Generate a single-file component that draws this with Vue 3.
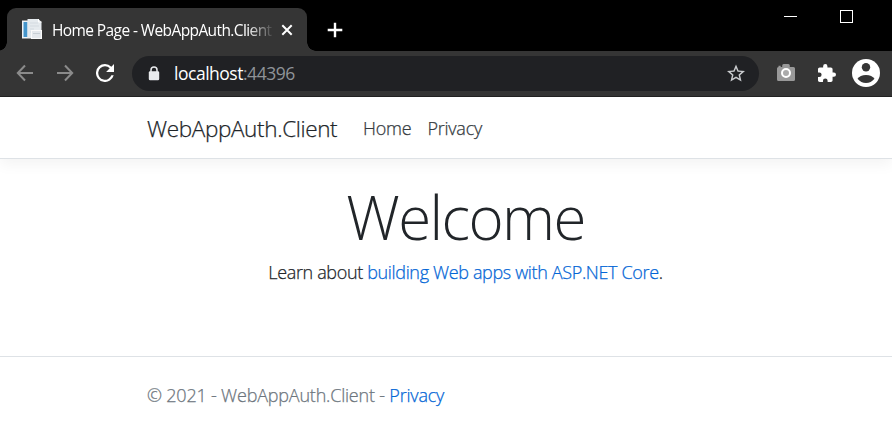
<script setup>
const navLinks = ['Home', 'Privacy']
</script>

<template>
  <div class="window">
    <header class="tabstrip">
      <div class="tab">
        <svg class="favicon" width="22" height="21" viewBox="0 0 22 21">
          <rect x="0" y="1.500" width="14" height="18" fill="#f0f3f6" />
          <rect x="1.500" y="3" width="4" height="15" fill="#4595cb" />
          <path d="M5.500 0h11l3 3v16h-14z" fill="#e5eaee" />
          <path d="M8 4h8M8 7h9M8 10h4M8 13h3" stroke="#d3dae0" />
          <path d="M16.500 0v3h3" fill="none" stroke="#fff" />
          <rect x="9.500" y="11.500" width="10" height="8" fill="#e4e8ec" stroke="#fafafa" />
          <path d="M11 14.500h7" stroke="#c8cfd5" />
        </svg>
        <span class="tab-title">Home Page - WebAppAuth.Client</span>
        <svg class="close" width="12" height="12" viewBox="0 0 12 12"><path d="M1.300 1.300l9.400 9.400M10.700 1.300l-9.400 9.400" stroke="#fff" stroke-width="2" /></svg>
      </div>
      <svg class="new-tab" width="16" height="16" viewBox="0 0 16 16"><path d="M8 .7v14.600M.7 8h14.600" stroke="#fff" stroke-width="2.400" /></svg>
      <div class="controls">
        <svg width="13" height="13" viewBox="0 0 13 13"><path d="M0 6.500h13" stroke="#fff" /></svg>
        <svg width="13" height="13" viewBox="0 0 13 13"><rect x=".5" y=".5" width="12" height="12" fill="none" stroke="#fff" /></svg>
      </div>
    </header>

    <div class="toolbar">
      <svg class="arrow" width="18" height="18" viewBox="0 0 18 18"><path d="M17 9H2M9 1.500L1.800 9 9 16.500" /></svg>
      <svg class="arrow forward" width="18" height="18" viewBox="0 0 18 18"><path d="M1 9h15M9 1.500L16.200 9 9 16.500" /></svg>
      <svg class="reload" width="18" height="18" viewBox="4 4 16 16"><path fill="#fff" d="M17.650 6.350A7.960 7.960 0 0 0 12 4a8 8 0 1 0 7.730 10h-2.080A6 6 0 1 1 12 6c1.660 0 3.140.69 4.220 1.780L13 11h7V4z" /></svg>
      <div class="omnibox">
        <svg class="lock" width="12" height="15" viewBox="0 0 12 15"><path d="M3 6V4a3 3 0 0 1 6 0v2" fill="none" stroke="#e8eaed" stroke-width="1.500" /><rect x=".8" y="5.200" width="10.400" height="9" rx="1.300" fill="#e8eaed" /></svg>
        <span class="url">localhost<span class="port">:44396</span></span>
        <svg class="star" width="18" height="18" viewBox="2 2 20 19"><path fill="#c9cbce" d="M22 9.240l-7.190-.62L12 2 9.190 8.630 2 9.240l5.460 4.730L5.820 21 12 17.270 18.180 21l-1.630-7.030zM12 15.400l-3.760 2.270 1-4.280-3.320-2.880 4.380-.38L12 6.100l1.710 4.040 4.380.38-3.320 2.880 1 4.280z" /></svg>
      </div>
      <svg class="camera" width="20" height="18" viewBox="0 0 20 18">
        <path d="M2.500 3V1.700h2.200V3h1.500V1.500Q6.200 0 7.700 0h4.600q1.500 0 1.500 1.500V3h3.700q1.500 0 1.500 1.500v11q0 1.500-1.500 1.500h-15Q1 17 1 15.500v-11Q1 3 2.500 3z" fill="#999" />
        <circle cx="10" cy="9" r="4" fill="#aaa" stroke="#fff" stroke-width="2" />
      </svg>
      <svg class="puzzle" width="18" height="18" viewBox="2 1 21 21"><path fill="#fff" d="M20.500 11H19V7c0-1.100-.9-2-2-2h-4V3.500a2.500 2.500 0 0 0-5 0V5H4c-1.100 0-2 .9-2 2v3.800h1.500a2.700 2.700 0 0 1 0 5.400H2V20c0 1.100.9 2 2 2h3.800v-1.500a2.700 2.700 0 0 1 5.400 0V22H17c1.100 0 2-.9 2-2v-4h1.500a2.500 2.500 0 0 0 0-5z" /></svg>
      <svg class="avatar" width="28" height="28" viewBox="0 0 28 28"><circle cx="14" cy="14" r="14" fill="#fff" /><circle cx="14" cy="8.300" r="4.200" fill="#353535" /><path d="M5.500 19.800Q8 16 14 16t8.500 3.800Q19 24 14 24t-8.500-4.200z" fill="#353535" /></svg>
    </div>

    <nav class="navbar">
      <a class="brand">WebAppAuth.Client</a>
      <a v-for="link in navLinks" :key="link" class="nav-link">{{ link }}</a>
    </nav>
    <main>
      <h1>Welcome</h1>
      <p>Learn about <a>building Web apps with ASP.NET Core</a>.</p>
    </main>
    <footer>
      <span>© 2021 - WebAppAuth.Client - <a>Privacy</a></span>
    </footer>
  </div>
</template>

<style>
body { margin: 0; background: #fff; }
</style>

<style scoped>
* { box-sizing: border-box; }
.window { width: 892px; height: 427px; overflow: hidden; display: flex; flex-direction: column; font-family: "Open Sans", "Noto Sans", sans-serif; font-weight: 300; color: #212529; background: #fff; white-space: nowrap; }
svg { display: block; flex: none; }
.tabstrip { height: 51px; flex: none; display: flex; background: #000; }
.tab { position: relative; width: 300px; height: 43px; margin: 8px 0 0 7px; padding: 0 14px 0 15px; border-radius: 9px 9px 0 0; background: #353535; display: flex; align-items: center; }
.tab::before, .tab::after { content: ""; position: absolute; bottom: 0; width: 9px; height: 9px; }
.tab::before { left: -9px; background: radial-gradient(circle at 0 0, #000 8.500px, #353535 9px); }
.tab::after { right: -9px; background: radial-gradient(circle at 100% 0, #000 8.500px, #353535 9px); }
.tab-title { width: 221px; margin-left: 8px; overflow: hidden; color: #fff; font-size: 15.500px; font-weight: 400; line-height: 24px; letter-spacing: -0.6px; mask-image: linear-gradient(to right, #000 195px, transparent 223px); }
.close { margin-left: 8px; }
.new-tab { margin: 22px 0 0 20px; }
.controls { margin: 10px 39px 0 auto; display: flex; gap: 43px; }
.toolbar { height: 46px; flex: none; display: flex; align-items: center; padding: 0 12px 1px 16px; background: #353535; border-bottom: 1px solid #222; }
.arrow { fill: none; stroke: #8b8b8b; stroke-width: 2; }
.forward { margin-left: 22px; }
.reload { margin-left: 22px; }
.omnibox { width: 627px; height: 35px; margin-left: 18px; padding: 0 14px 0 16px; border-radius: 18px; background: #202124; display: flex; align-items: center; }
.url { margin-left: 14px; color: #fff; font-size: 17.500px; font-weight: 400; line-height: 24px; letter-spacing: -0.48px; }
.port { color: #8f9398; }
.star { margin-left: auto; }
.camera { margin-left: 16.500px; }
.puzzle { margin-left: 22px; }
.avatar { margin-left: auto; }
.navbar { height: 62px; flex: none; display: flex; align-items: center; padding: 1px 0 0 147px; border-bottom: 1px solid #dee2e6; box-shadow: 0 5px 14px rgba(0, 0, 0, .05); }
.brand { width: 216px; font-size: 22.500px; letter-spacing: -0.36px; }
.nav-link { width: 64.500px; font-size: 18px; letter-spacing: -0.25px; color: #343a40; }
.brand, .nav-link, p, footer { -webkit-text-stroke: 0.25px currentColor; }
main { height: 197px; flex: none; text-align: center; padding: 16px 0 0 39px; }
h1 { margin: 0; font-size: 60px; font-weight: 300; line-height: 84px; letter-spacing: -1.600px; }
p { margin: -1px 0 0; font-size: 18px; line-height: 28px; letter-spacing: -0.35px; }
a { text-decoration: none; }
p a, footer a { color: #0366d6; }
footer { flex: 1; border-top: 1px solid #dee2e6; padding: 24px 0 0 147px; font-size: 18px; line-height: 28px; letter-spacing: -0.2px; color: #6c757d; }
</style>
